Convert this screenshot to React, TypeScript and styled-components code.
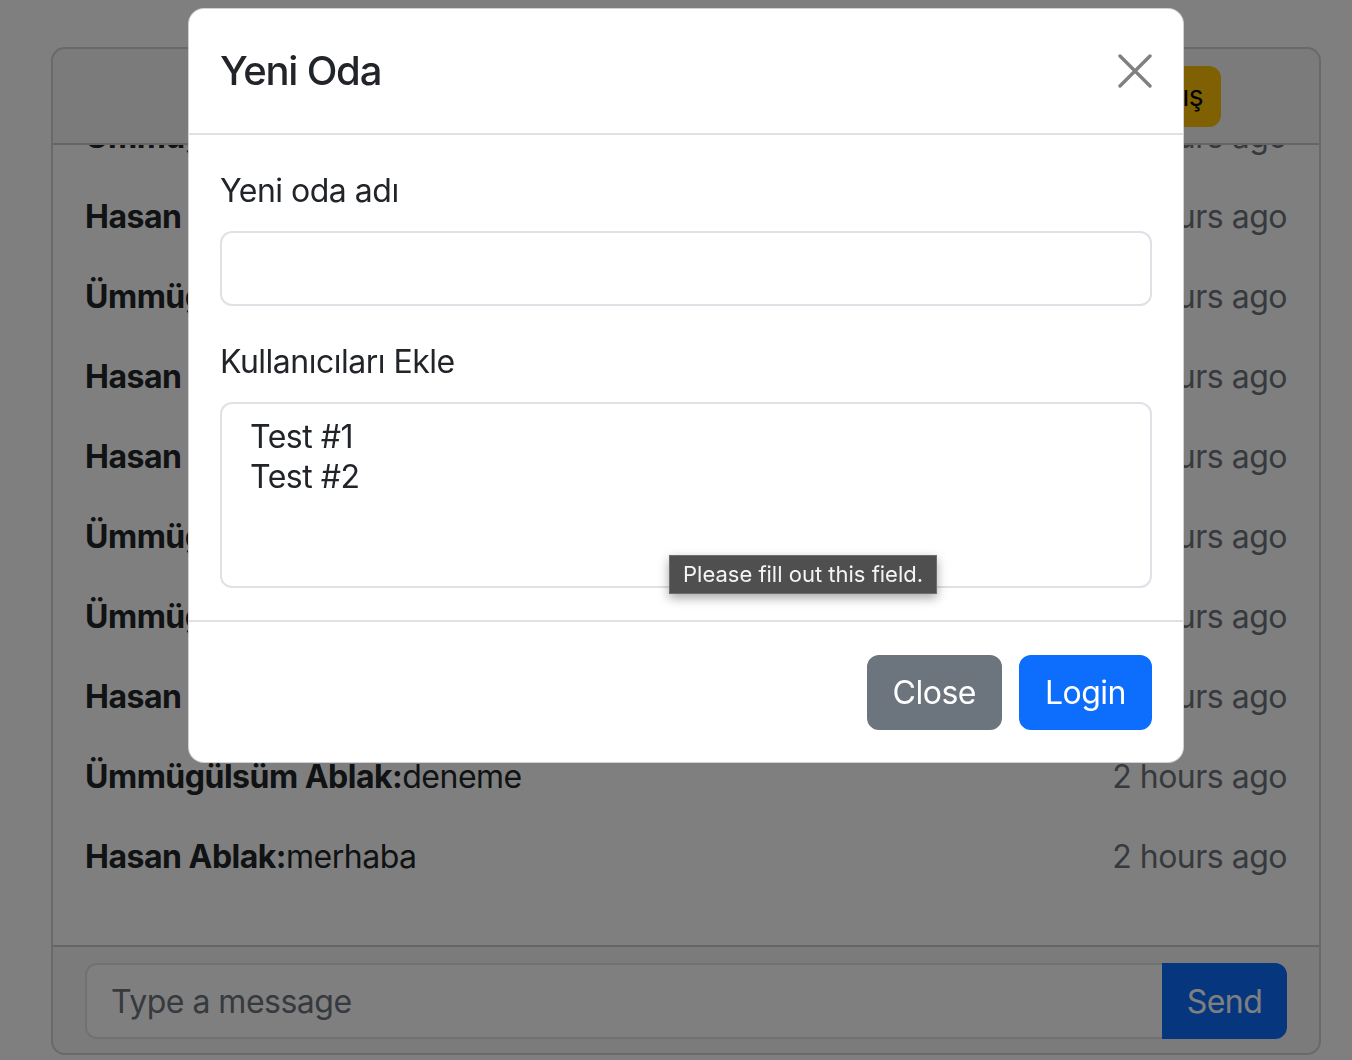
import styled, { createGlobalStyle } from "styled-components";

const GlobalStyle = createGlobalStyle`
  html, body {
    margin: 0;
    padding: 0;
    background: #ffffff;
    font-family: Inter, "Noto Sans", "Liberation Sans", sans-serif;
    color: #212529;
    letter-spacing: -0.5px;
  }
  * { box-sizing: border-box; }
  button, input { letter-spacing: -0.5px; }
`;

interface Message {
  author: string;
  text: string;
  time: string;
}

const messages: Message[] = [
  { author: "Ümmügülsüm Ablak", text: "selam", time: "2 hours ago" },
  { author: "Hasan Ablak", text: "nasılsın", time: "2 hours ago" },
  { author: "Ümmügülsüm Ablak", text: "iyiyim", time: "2 hours ago" },
  { author: "Hasan Ablak", text: "test", time: "2 hours ago" },
  { author: "Hasan Ablak", text: "deneme", time: "2 hours ago" },
  { author: "Ümmügülsüm Ablak", text: "merhaba", time: "2 hours ago" },
  { author: "Ümmügülsüm Ablak", text: "selam", time: "2 hours ago" },
  { author: "Hasan Ablak", text: "deneme", time: "2 hours ago" },
  { author: "Ümmügülsüm Ablak", text: "deneme", time: "2 hours ago" },
  { author: "Hasan Ablak", text: "merhaba", time: "2 hours ago" },
];

const users = ["Test #1", "Test #2"];

const App = () => {
  return (
    <>
      <GlobalStyle />
      <Card>
        <CardHeader>
          <WarningButton>Çıkış</WarningButton>
        </CardHeader>
        <MessageList>
          {messages.map((m, i) => (
            <MessageRow key={i}>
              <span>
                <Author>{m.author}:</Author>
                {m.text}
              </span>
              <Time>{m.time}</Time>
            </MessageRow>
          ))}
        </MessageList>
        <CardFooter>
          <InputGroup>
            <MessageInput placeholder="Type a message" />
            <SendButton>Send</SendButton>
          </InputGroup>
        </CardFooter>
      </Card>

      <Backdrop />
      <Modal>
        <ModalHeader>
          <ModalTitle>Yeni Oda</ModalTitle>
          <CloseIcon aria-label="Close">
            <svg width="34" height="34" viewBox="0 0 34 34">
              <path
                d="M2 2 L32 32 M32 2 L2 32"
                stroke="#808080"
                strokeWidth="3.4"
                strokeLinecap="round"
              />
            </svg>
          </CloseIcon>
        </ModalHeader>
        <ModalBody>
          <Field>
            <Label>Yeni oda adı</Label>
            <TextInput />
          </Field>
          <Field $last>
            <Label>Kullanıcıları Ekle</Label>
            <MultiSelect role="listbox">
              {users.map((u) => (
                <Option key={u}>{u}</Option>
              ))}
            </MultiSelect>
          </Field>
        </ModalBody>
        <ModalFooter>
          <Button $variant="secondary">Close</Button>
          <Button $variant="primary">Login</Button>
        </ModalFooter>
        <ValidationBubble>Please fill out this field.</ValidationBubble>
      </Modal>
    </>
  );
};

export default App;

const Card = styled.div`
  margin: 47px 0 0 51px;
  width: 1270px;
  display: flex;
  flex-direction: column;
  border: 2px solid rgba(0, 0, 0, 0.175);
  border-radius: 14px;
  overflow: hidden;
  background: #ffffff;
`;

const CardHeader = styled.div`
  height: 96px;
  display: flex;
  align-items: center;
  justify-content: flex-end;
  padding: 0 98px 0 32px;
  background: rgba(0, 0, 0, 0.03);
  border-bottom: 2px solid rgba(0, 0, 0, 0.175);
`;

const WarningButton = styled.button`
  height: 61px;
  padding: 0 16px;
  font-family: inherit;
  font-size: 28px;
  color: #000000;
  background: #ffc107;
  border: 2px solid #ffc107;
  border-radius: 12px;
`;

const MessageList = styled.div`
  height: 800px;
  overflow: hidden;
  padding: 32px;
  display: flex;
  flex-direction: column;
  justify-content: flex-end;
`;

const MessageRow = styled.div`
  flex-shrink: 0;
  display: flex;
  justify-content: space-between;
  font-size: 32px;
  line-height: 48px;
  margin-bottom: 32px;
  color: #212529;
`;

const Author = styled.strong`
  font-weight: 700;
`;

const Time = styled.span`
  color: #6c757d;
`;

const CardFooter = styled.div`
  padding: 16px 32px 14px;
  background: rgba(0, 0, 0, 0.03);
  border-top: 2px solid rgba(0, 0, 0, 0.175);
`;

const InputGroup = styled.div`
  display: flex;
  height: 76px;
`;

const MessageInput = styled.input`
  flex: 1;
  min-width: 0;
  padding: 0 24px;
  font-family: inherit;
  font-size: 32px;
  color: #212529;
  background: #ffffff;
  border: 2px solid #dee2e6;
  border-right: none;
  border-radius: 12px 0 0 12px;
  outline: none;
  &::placeholder {
    color: #6c757d;
  }
`;

const SendButton = styled.button`
  width: 125px;
  font-family: inherit;
  font-size: 32px;
  color: #ffffff;
  background: #0d6efd;
  border: 2px solid #0d6efd;
  border-radius: 0 12px 12px 0;
`;

const Backdrop = styled.div`
  position: fixed;
  inset: 0;
  background: rgba(0, 0, 0, 0.5);
`;

const Modal = styled.div`
  position: fixed;
  top: 8px;
  left: 188px;
  width: 996px;
  background: #ffffff;
  border: 1px solid rgba(0, 0, 0, 0.175);
  border-radius: 16px;
`;

const ModalHeader = styled.div`
  display: flex;
  align-items: center;
  justify-content: space-between;
  padding: 32px 31px;
  border-bottom: 2px solid #dee2e6;
`;

const ModalTitle = styled.h5`
  margin: 0;
  font-size: 40px;
  font-weight: 500;
  line-height: 60px;
  letter-spacing: -1.2px;
  color: #212529;
`;

const CloseIcon = styled.button`
  display: flex;
  padding: 0;
  background: none;
  border: none;
`;

const ModalBody = styled.div`
  padding: 32px 31px;
`;

const Field = styled.div<{ $last?: boolean }>`
  margin-bottom: ${(p) => (p.$last ? "0" : "32px")};
`;

const Label = styled.label`
  display: block;
  margin-bottom: 16px;
  font-size: 32px;
  line-height: 48px;
  color: #212529;
`;

const TextInput = styled.input`
  display: block;
  width: 100%;
  height: 75px;
  padding: 0 24px;
  font-family: inherit;
  font-size: 32px;
  border: 2px solid #dee2e6;
  border-radius: 12px;
  outline: none;
`;

const MultiSelect = styled.div`
  height: 186px;
  padding: 13px 24px;
  border: 2px solid #dee2e6;
  border-radius: 12px;
`;

const Option = styled.div`
  padding: 0 4px;
  font-size: 32px;
  line-height: 40px;
  color: #212529;
`;

const ModalFooter = styled.div`
  display: flex;
  justify-content: flex-end;
  gap: 17px;
  padding: 33px 31px 32px;
  border-top: 2px solid #dee2e6;
`;

const Button = styled.button<{ $variant: "primary" | "secondary" }>`
  height: 75px;
  padding: 0 24px;
  font-family: inherit;
  font-size: 32px;
  color: #ffffff;
  background: ${(p) => (p.$variant === "primary" ? "#0d6efd" : "#6c757d")};
  border: 2px solid ${(p) => (p.$variant === "primary" ? "#0d6efd" : "#6c757d")};
  border-radius: 12px;
`;

const ValidationBubble = styled.div`
  position: absolute;
  left: 480px;
  top: 546px;
  height: 39px;
  padding: 0 13px;
  font-size: 22px;
  line-height: 37px;
  letter-spacing: 0;
  color: #f4f4f4;
  background: #4f4f4f;
  border: 1px solid #6e6e6e;
  box-shadow: 0 4px 10px rgba(0, 0, 0, 0.35);
  white-space: nowrap;
`;
